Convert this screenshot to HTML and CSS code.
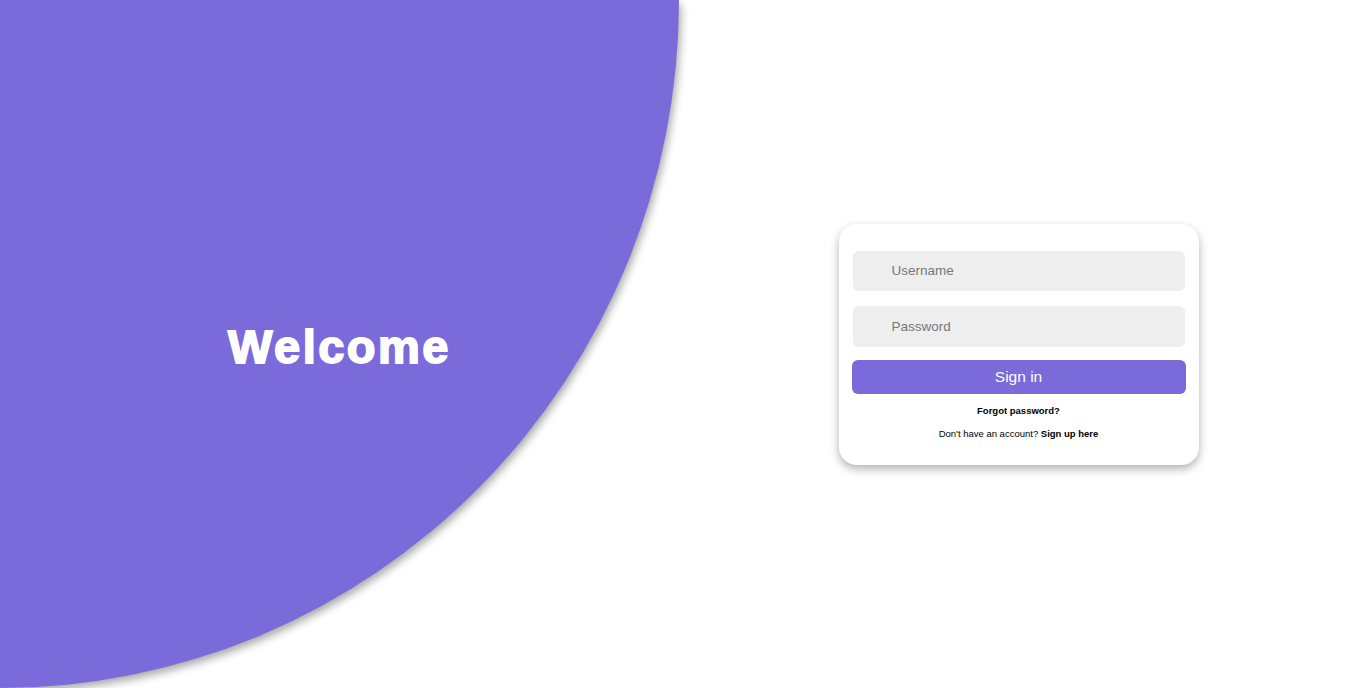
FILE: index.html
```html
<!DOCTYPE html>
<html lang="en">
<head>
<meta charset="utf-8">
<title>Welcome</title>
<link rel="stylesheet" href="styles.css">
</head>
<body>
<div class="page">
  <section class="hero">
    <h1 class="hero-title">Welcome</h1>
  </section>
  <main class="panel">
    <form class="card">
      <input class="field" type="text" placeholder="Username">
      <input class="field" type="password" placeholder="Password">
      <button class="btn" type="button">Sign in</button>
      <p class="forgot"><a href="#">Forgot password?</a></p>
      <p class="signup">Don't have an account? <a href="#">Sign up here</a></p>
    </form>
  </main>
</div>
</body>
</html>
```
FILE: styles.css
```css
* { box-sizing: border-box; }
html, body { margin: 0; padding: 0; height: 100%; }
body {
  font-family: "Liberation Sans", Arial, sans-serif;
  background: #fff;
  overflow: hidden;
}
.page {
  display: flex;
  width: 100%;
  height: 100vh;
}
.hero {
  width: 679px;
  flex: 0 0 679px;
  height: 100%;
  background: #7b6ad9;
  border-bottom-right-radius: 100% 100%;
  box-shadow: 2px 4px 8px rgba(0,0,0,0.35);
  display: flex;
  align-items: center;
  justify-content: center;
}
.hero-title {
  margin: 4px 0 0 0;
  color: #fff;
  font-family: "Liberation Sans", Arial, sans-serif;
  font-weight: 700;
  font-size: 47px;
  letter-spacing: 2.5px;
  -webkit-text-stroke: 1.8px #fff;
}
.panel {
  flex: 1;
  display: flex;
  align-items: center;
  justify-content: center;
}
.card {
  width: 360px;
  background: #fff;
  border-radius: 18px;
  box-shadow: 0 4px 10px rgba(0,0,0,0.3);
  padding: 27px 13px 26px;
  display: flex;
  flex-direction: column;
}
.field {
  display: block;
  margin: 0 1px;
  height: 40px;
  border: none;
  border-radius: 6px;
  background: #eeeeee;
  padding: 0 12px 0 39px;
  font-family: "Liberation Sans", Arial, sans-serif;
  font-size: 13.5px;
  color: #333;
  outline: none;
}
.field + .field { margin-top: 15px; height: 41px; }
.field::placeholder { color: #777; }
.btn {
  margin-top: 13px;
  height: 34px;
  border: none;
  border-radius: 6px;
  background: #7b6ad9;
  color: #fff;
  font-family: "Liberation Sans", Arial, sans-serif;
  font-size: 15.5px;
  cursor: pointer;
}
.forgot, .signup {
  margin: 0;
  text-align: center;
  font-size: 9.5px;
  color: #000;
}
.forgot { margin-top: 11px; }
.signup { margin-top: 12px; }
.forgot a, .signup a {
  color: #000;
  font-weight: 700;
  text-decoration: none;
}
```
